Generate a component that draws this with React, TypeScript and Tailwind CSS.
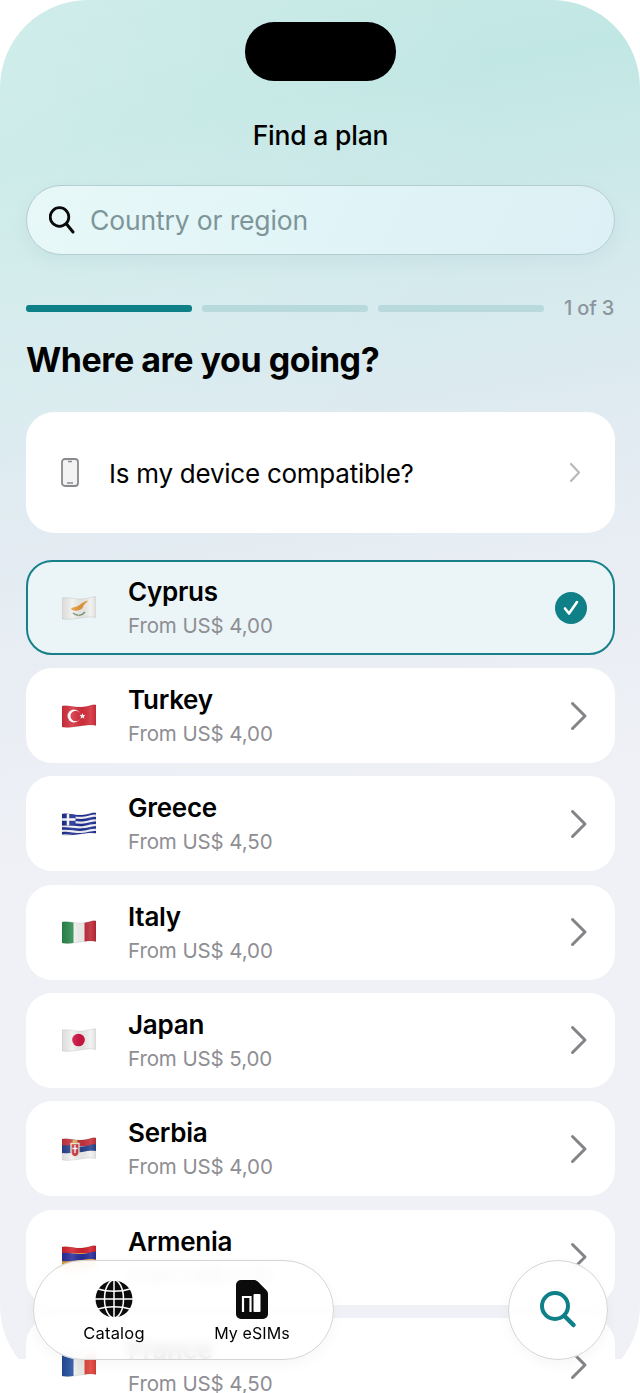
import React from "react";

const WAVE = "M0 2C8 .8 12 3.500 20 3S30 0 34 1V21.500C28 20.500 26 20.800 20 21.800S6 24 0 23Z";

function Flag({ id, children }: { id: string; children: React.ReactNode }) {
  return (
    <svg width="34" height="24" viewBox="0 0 34 24" className="shrink-0">
      <defs>
        <clipPath id={id}>
          <path d={WAVE} />
        </clipPath>
        <linearGradient id={`${id}-s`} x1="0" x2="1" y1="0" y2="0">
          <stop offset="0" stopColor="#000" stopOpacity="0.08" />
          <stop offset="0.3" stopColor="#fff" stopOpacity="0.12" />
          <stop offset="0.6" stopColor="#000" stopOpacity="0.06" />
          <stop offset="0.85" stopColor="#fff" stopOpacity="0.1" />
          <stop offset="1" stopColor="#000" stopOpacity="0.06" />
        </linearGradient>
      </defs>
      <g clipPath={`url(#${id})`}>
        {children}
        <rect width="34" height="24" fill={`url(#${id}-s)`} />
      </g>
      <path d={WAVE} fill="none" stroke="#000" strokeOpacity="0.14" strokeWidth="0.6" />
    </svg>
  );
}

const stripe = (y: number) => `M0 ${y}C8 ${y - 1} 12 ${y + 1.500} 20 ${y + 1}S30 ${y - 2} 34 ${y - 1}`;

const flags: Record<string, React.ReactNode> = {
  Cyprus: (
    <Flag id="cy">
      <rect width="34" height="24" fill="#f0f0ee" />
      <path d="M9 12.500C11 11 15 11 17.500 9S22 5.500 26 4.500C25 6.500 22.500 8 21.500 9.500 21.500 12 18.500 14.500 15 14.500 12.500 15 10 14.500 9 12.500Z" fill="#e59a3a" />
      <path d="M11 17c1.500 1.500 3.500 2 5.500 2.500M23 16c-1.500 1.800-3.500 3-6 3.500" stroke="#7f9a78" strokeWidth="1.500" fill="none" />
    </Flag>
  ),
  Turkey: (
    <Flag id="tr">
      <rect width="34" height="24" fill="#d6303e" />
      <circle cx="12" cy="12" r="6.500" fill="#fff" />
      <circle cx="13.700" cy="12" r="5.200" fill="#d6303e" />
      <path d="M20.500 9l.8 2.100 2.200.1-1.700 1.400.6 2.200-1.900-1.200-1.900 1.200.6-2.200-1.700-1.400 2.200-.1Z" fill="#fff" />
    </Flag>
  ),
  Greece: (
    <Flag id="gr">
      <rect width="34" height="24" fill="#f6f6fa" />
      {[2.500, 7.200, 11.900, 16.600, 21.300].map((y) => (
        <path key={y} d={stripe(y)} stroke="#1d2f93" strokeWidth="2.500" fill="none" />
      ))}
      <rect width="13.500" height="13.500" fill="#1d2f93" />
      <path d="M6 0v13.500M0 7.500h13.500" stroke="#fff" strokeWidth="2.500" />
    </Flag>
  ),
  Italy: (
    <Flag id="it">
      <rect width="34" height="24" fill="#f4f4f2" />
      <rect width="11.500" height="24" fill="#2c8a4e" />
      <rect x="22.500" width="11.500" height="24" fill="#bf2c39" />
    </Flag>
  ),
  Japan: (
    <Flag id="jp">
      <rect width="34" height="24" fill="#f1f1f1" />
      <circle cx="16.500" cy="12" r="6.300" fill="#cf1342" />
    </Flag>
  ),
  Serbia: (
    <Flag id="rs">
      <rect width="34" height="24" fill="#f2f2f2" />
      <rect width="34" height="9" fill="#c7343f" />
      <path d={`${stripe(8.500)}V14C28 13.500 26 14 20 15S6 16.500 0 16Z`} fill="#2a458f" />
      <path d="M9 6.500h8v9c0 2.500-2 4-4 4.500-2-.5-4-2-4-4.500Z" fill="#c7343f" stroke="#efe6da" strokeWidth="1.300" />
      <rect x="10.500" y="3" width="5" height="3" rx="1" fill="#d9b25a" />
      <path d="M13 8v8M10.500 11.500h5" stroke="#fff" strokeWidth="1.300" />
    </Flag>
  ),
  Armenia: (
    <Flag id="am">
      <rect width="34" height="24" fill="#e8a33d" />
      <rect width="34" height="8" fill="#d3232f" />
      <path d={`${stripe(8)}V14.500C28 13.500 26 14 20 15S6 16.500 0 16Z`} fill="#2a2f9c" />
    </Flag>
  ),
  France: (
    <Flag id="fr">
      <rect width="34" height="24" fill="#f4f4f2" />
      <rect width="11.500" height="24" fill="#23509f" />
      <rect x="22.500" width="11.500" height="24" fill="#e2443c" />
    </Flag>
  ),
};

const rows = [
  ["Turkey", "From US$ 4,00"],
  ["Greece", "From US$ 4,50"],
  ["Italy", "From US$ 4,00"],
  ["Japan", "From US$ 5,00"],
  ["Serbia", "From US$ 4,00"],
  ["Armenia", "From US$ 4,00"],
  ["France", "From US$ 4,50"],
];

function Chevron({ small }: { small?: boolean }) {
  return small ? (
    <svg width="12" height="21" viewBox="0 0 12 21" fill="none" className="shrink-0">
      <path d="M2 2l8 8.500-8 8.500" stroke="#b9b9bd" strokeWidth="2.200" strokeLinecap="round" strokeLinejoin="round" />
    </svg>
  ) : (
    <svg width="18" height="30" viewBox="0 0 18 30" fill="none" className="shrink-0">
      <path d="M2.500 2.500L15 15 2.500 27.500" stroke="#848488" strokeWidth="3" strokeLinecap="round" strokeLinejoin="round" />
    </svg>
  );
}

function RowText({ name, price }: { name: string; price: string }) {
  return (
    <div className="mt-[2px] ml-[32px] flex min-w-0 flex-1 flex-col">
      <span className="h-[33px] text-[26px] leading-[33px] font-[590] tracking-[-0.25px] text-black">{name}</span>
      <span className="mt-[1px] h-[33px] text-[20.500px] leading-[33px] tracking-[-0.1px] text-[#8e8e93]">{price}</span>
    </div>
  );
}

function Globe() {
  return (
    <svg width="38" height="38" viewBox="0 0 38 38" fill="none">
      <circle cx="19" cy="19" r="18.500" fill="#0b0b0b" />
      <g stroke="#fff" strokeWidth="1.500">
        <path d="M19 0v38M0 19h38" />
        <ellipse cx="19" cy="19" rx="9.500" ry="19" />
        <path d="M3 9c9 3 23 3 32 0M3 29c9-3 23-3 32 0" />
      </g>
    </svg>
  );
}

function Sim() {
  return (
    <svg width="32" height="39" viewBox="0 0 32 39" fill="none">
      <path d="M5 0h13c1.500 0 2.700.5 3.800 1.600l8.600 8.600c1 1 1.600 2.300 1.600 3.800V34a5 5 0 0 1-5 5H5a5 5 0 0 1-5-5V5a5 5 0 0 1 5-5Z" fill="#0b0b0b" />
      <path d="M7 32V17h7.500v15" stroke="#fff" strokeWidth="2.200" />
      <rect x="17.500" y="14" width="7" height="18" rx="1" fill="#fff" />
    </svg>
  );
}

export default function App() {
  return (
    <div className="relative h-[1393px] w-[640px] overflow-hidden bg-white font-[Inter,'Noto_Sans',sans-serif] text-black">
      <div className="absolute inset-0 rounded-[88px] bg-[radial-gradient(circle_at_0%_8%,rgba(255,255,255,0.2),rgba(255,255,255,0)_35%),linear-gradient(170deg,#c6e9e6_0%,#c1e7e4_10%,#d4eaed_24%,#e2ebf2_36%,#e9eef4_46%,#f0f1f6_60%,#f0f1f6_100%)]" />
      <div className="absolute inset-x-0 bottom-0 h-[34px] bg-white" />

      <div className="relative flex flex-col pr-[25px] pl-[26px]">
        <div className="mx-auto mt-[22px] h-[59px] w-[151px] rounded-[29px] bg-black" />
        <h1 className="mt-[37px] h-[34px] text-center text-[26.500px] leading-[34px] font-medium tracking-[-0.2px]">Find a plan</h1>

        <div className="mt-[33px] flex h-[70px] items-center rounded-full border border-[#b4cdd0] bg-[linear-gradient(115deg,#e8f8f8_0%,#e1f4f7_50%,#dcf0f5_100%)] pl-[22px] shadow-[0_6px_16px_rgba(120,150,170,0.1)]">
          <svg width="27" height="28" viewBox="0 0 27 28" fill="none" className="shrink-0">
            <circle cx="10.500" cy="11" r="9.300" stroke="#0a0a0a" strokeWidth="2.800" />
            <path d="M17.500 18l6.500 8" stroke="#0a0a0a" strokeWidth="3" strokeLinecap="round" />
          </svg>
          <span className="mt-[2px] ml-[14px] text-[26.500px] tracking-[-0.15px] text-[#7d9598]">Country or region</span>
        </div>

        <div className="mt-[50px] flex items-center">
          <div className="h-[7px] w-[166px] rounded-[3px] bg-[#0f7f88]" />
          <div className="ml-[10px] h-[7px] w-[166px] rounded-[3px] bg-[#b9dadd]" />
          <div className="ml-[10px] h-[7px] w-[166px] rounded-[3px] bg-[#b9dadd]" />
          <span className="mr-[1px] ml-auto text-[20px] leading-[7px] font-medium tracking-[-0.2px] text-[#8b959c]">1 of 3</span>
        </div>

        <h2 className="mt-[26px] h-[44px] text-[34px] leading-[44px] font-bold tracking-[-0.45px]">Where are you going?</h2>

        <div className="mt-[30px] flex h-[121px] items-center rounded-[28px] bg-white pr-[34px] pl-[35px]">
          <svg width="18" height="29" viewBox="0 0 18 29" fill="none" className="shrink-0">
            <rect x="1" y="1" width="16" height="27" rx="3" fill="#f3f3f4" stroke="#8a8a8e" strokeWidth="1.800" />
            <path d="M7 3.500h4M6 25h6" stroke="#8a8a8e" strokeWidth="1.300" />
          </svg>
          <span className="mt-[1px] ml-[30px] flex-1 text-[26px] tracking-[-0.25px]">Is my device compatible?</span>
          <Chevron small />
        </div>

        <div className="mt-[27px] flex h-[95px] items-center rounded-[26px] border-2 border-[#17808a] bg-[#ebf5f7] pr-[26px] pl-[34px]">
          {flags.Cyprus}
          <RowText name="Cyprus" price="From US$ 4,00" />
          <div className="flex h-[32px] w-[32px] shrink-0 items-center justify-center rounded-full bg-[#0f7f88]">
            <svg width="18" height="18" viewBox="0 0 18 18" fill="none">
              <path d="M3 9.500l4 5L15 3" stroke="#fff" strokeWidth="2.600" strokeLinecap="round" strokeLinejoin="round" />
            </svg>
          </div>
        </div>

        <div className="mt-[13px] flex flex-col gap-[13.330px]">
          {rows.map(([name, price]) => (
            <div key={name} className="flex h-[95px] items-center rounded-[26px] bg-white pr-[27px] pl-[36px]">
              {flags[name]}
              <RowText name={name} price={price} />
              <Chevron />
            </div>
          ))}
        </div>
      </div>

      <nav className="absolute top-[1260px] left-[33px] flex h-[100px] w-[301px] rounded-full border border-[#d4d4d6] bg-white/90 shadow-[0_4px_14px_rgba(0,0,0,0.04)] backdrop-blur-[6px]">
        <div className="ml-[40px] flex w-[80px] flex-col items-center pt-[19px]">
          <Globe />
          <span className="mt-[3px] text-[16.500px] leading-[24px] tracking-[0.2px]">Catalog</span>
        </div>
        <div className="ml-[48px] flex w-[100px] flex-col items-center pt-[19px]">
          <Sim />
          <span className="mt-[2px] text-[16px] leading-[24px] tracking-[0.1px]">My eSIMs</span>
        </div>
      </nav>

      <button className="absolute top-[1260px] left-[508px] flex h-[100px] w-[100px] items-center justify-center rounded-full border border-[#d4d4d6] bg-white/90 shadow-[0_4px_14px_rgba(0,0,0,0.04)] backdrop-blur-[6px]">
        <svg width="38" height="38" viewBox="0 0 38 38" fill="none">
          <circle cx="16" cy="15" r="13" stroke="#0f7f88" strokeWidth="4" />
          <path d="M25.500 25l9 9" stroke="#0f7f88" strokeWidth="4.500" strokeLinecap="round" />
        </svg>
      </button>
    </div>
  );
}
